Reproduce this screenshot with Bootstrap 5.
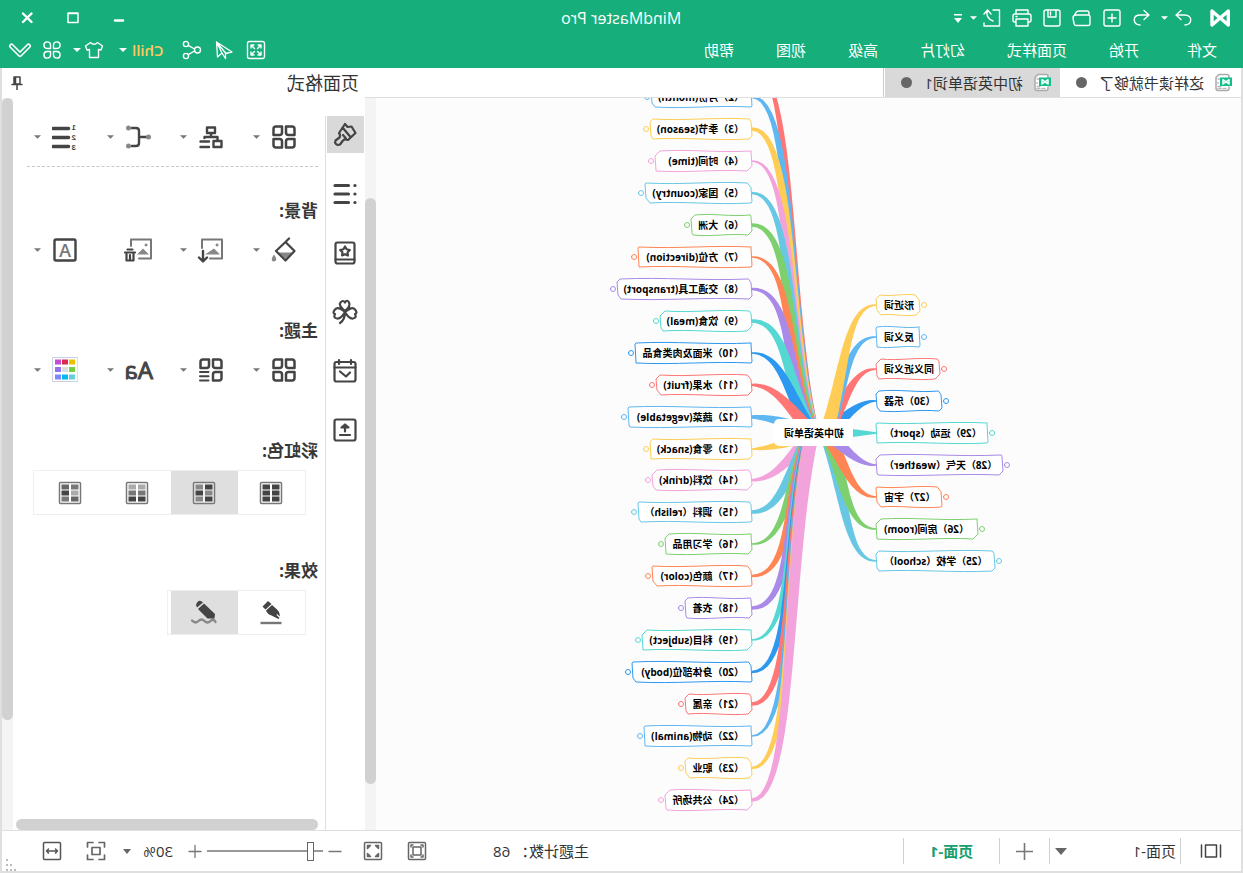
<!DOCTYPE html>
<html lang="zh-CN">
<head>
<meta charset="utf-8">
<meta name="viewport" content="width=device-width, initial-scale=1">
<title>MindMaster Pro</title>
<link href="https://cdn.jsdelivr.net/npm/bootstrap@5.3.0/dist/css/bootstrap.min.css" rel="stylesheet">
<style>
  :root { --brand: #16ae7a; --line: #dfdfdf; --ink: #444; }
  body { font-family: "Open Sans", "Noto Sans CJK SC", sans-serif; font-size: 15px; line-height: 20px; color: #333; overflow: hidden; }
  /* the whole window is shown flipped left to right */
  .window { transform: scaleX(-1); }
  button, select { font: inherit; color: inherit; background: none; border: 0; padding: 0; }
  button { display: inline-flex; align-items: center; justify-content: center; }
  svg { fill: none; stroke-linecap: round; stroke-linejoin: round; display: block; flex: none; }
  svg:not([stroke]) { stroke: currentColor; }
  svg.solid, .solid { fill: currentColor; stroke: none; }
  .soft { color: #888; }
  .title-bar { background: var(--brand); color: #fff; }
  .row-top { height: 36px; }
  .row-menu { height: 32px; padding-left: 26px; }
  .quick { gap: 6px; padding-left: 12px; }
  .pair { gap: 1px; }
  .tool { width: 24px; height: 24px; }
  .drop { width: 10px; height: 24px; }
  .win-btn { width: 46px; height: 36px; }
  .menu-list { gap: 42px; }
  .menu-list a { color: #fff; text-decoration: none; }
  .menu-list a:first-child { margin-right: 6px; }
  .chill { color: #ffc862; font-weight: 600; }
  .work { border: solid var(--line); border-width: 0 2px 2px; }
  .tabs { height: 30px; border-bottom: 1px solid var(--line); }
  .doc-tab { height: 29px; padding: 0 16px 0 8px; gap: 10px; }
  .doc-tab.active { background: #d9d9d9; }
  .doc-dot { width: 11px; height: 11px; border-radius: 50%; background: #666; margin-left: 2px; }
  .tab-end { width: 2px; border-right: 1px solid #ccc; }
  .canvas { background: #fcfcfc; }
  .canvas text { font-size: 10px; font-weight: 700; fill: #000; stroke: none; }
  .bar-v { width: 11px; flex: none; background: #f4f4f4; }
  .thumb { background: #d1d1d1; border-radius: 6px; }
  .thumb-map { height: 80%; margin: auto 0 46px; }
  .thumb-side { height: 85%; }
  .bar-h { height: 11px; margin: 0 3px 0 7px; }
  .side { width: 363px; flex: none; }
  .side-head { height: 30px; padding: 0 8px 0 6px; font-size: 18px; }
  .strip { width: 40px; flex: none; margin-top: 18px; gap: 22px; border-right: 1px solid var(--line); padding-left: 1px; color: var(--ink); }
  .strip button { width: 37px; height: 37px; }
  .strip .active { background: #d9d9d9; }
  .options { padding: 19px 14px 0 7px; color: var(--ink); min-width: 0; }
  .tool-row { height: 40px; padding-left: 18px; }
  .slot { flex: none; }
  .slot:not(:last-child) { width: 73px; }
  .slot .main-btn { width: 32px; height: 32px; }
  .slot .arrow-btn { width: 22px; height: 32px; color: #777; }
  .dashed { border-top: 1px dashed #c8c8c8; margin: 9px 0 32px; }
  .block { min-height: 120px; }
  .block h2 { font-size: 17px; line-height: 24px; font-weight: 700; margin: 0 0 7px; color: #383838; }
  .seg { border: 1px solid #efefef; width: max-content; height: 45px; margin-left: 12px; padding-right: 3px; }
  .seg button { width: 67px; height: 43px; }
  .seg .active { background: #dfdfdf; }
  .status { height: 41px; border-top: 1px solid var(--line); }
  .rule { width: 1px; height: 26px; background: #d0d0d0; }
  .pick { appearance: none; background: no-repeat right center url("data:image/svg+xml,%3Csvg xmlns='http://www.w3.org/2000/svg' width='12' height='7'%3E%3Cpath d='M0 0h12l-6 7z' fill='%23666'/%3E%3C/svg%3E"); }
  .page-pick { width: 121px; margin: 0 5px 0 4px; }
  .zoom-pick { width: 50px; margin: 0 15px 0 12px; background-size: 8px 5px; }
  .page-now { width: 95px; color: #16a06e; font-weight: 700; }
  .zoom { appearance: none; width: 116px; height: 20px; margin: 0 2px; background: linear-gradient(#999, #999) no-repeat center / 100% 2px; }
  .zoom::-webkit-slider-thumb { appearance: none; width: 7px; height: 19px; background: #fff; border: 1px solid #666; }
  .zoom::-moz-range-thumb { width: 5px; height: 17px; border-radius: 0; background: #fff; border: 1px solid #666; }
  .digits { font: 700 8px "Liberation Sans", sans-serif; }
  .aa { font: 24px "Open Sans", sans-serif; stroke: currentColor; stroke-width: 1; }
  .mark-a { font: 600 18px "Open Sans", sans-serif; fill: #777; stroke: none; }
  .grip { color: #bbb; }
</style>
</head>
<body>
<div class="window d-flex flex-column vh-100 bg-white">

<header class="title-bar">
  <div class="row-top d-flex align-items-center">
    <div class="quick d-flex align-items-center flex-fill w-50">
      <svg class="me-2" width="22" height="20" viewBox="0 0 22 20" stroke-width="3.400"><path d="M2.700 17V3L19 17V3L11.600 9.600M2.700 17L9.600 11"/></svg>
      <span class="pair d-flex">
        <button class="tool" aria-label="重做"><svg width="22" height="22" viewBox="0 0 22 22" stroke-width="1.400"><path d="M13 3.500L18 8l-5 4.500M18 8H9.500C1 8 1.500 17 9 18"/></svg></button>
        <button class="drop" aria-label="更多重做"><svg class="solid" width="7" height="4" viewBox="0 0 8 4"><path d="M0 0h8L4 4z"/></svg></button>
      </span>
      <button class="tool" aria-label="撤销"><svg width="22" height="22" viewBox="0 0 22 22" stroke-width="1.400"><path d="M9 3.500L4 8l5 4.500M4 8h8.500C21 8 20.500 17 13 18"/></svg></button>
      <button class="tool" aria-label="新建"><svg width="22" height="22" viewBox="0 0 22 22" stroke-width="1.400"><rect x="3" y="3" width="16" height="16" rx="2"/><path d="M11 7v8M7 11h8"/></svg></button>
      <button class="tool" aria-label="打开"><svg width="22" height="22" viewBox="0 0 22 22" stroke-width="1.400"><path d="M4 8V6q0-2 2-2h8q2 0 3 1.500L18.500 8M4 8h13q3 0 3 3l-1 5.500q-.3 2-2 2H5q-2 0-2-2V10q0-2 2-2"/></svg></button>
      <button class="tool" aria-label="保存"><svg width="22" height="22" viewBox="0 0 22 22" stroke-width="1.400"><rect x="3" y="3" width="16" height="16" rx="2"/><path d="M7 3v7h8V3M12.500 5v3"/></svg></button>
      <button class="tool" aria-label="打印"><svg width="22" height="22" viewBox="0 0 22 22" stroke-width="1.400"><path d="M5 7V3h12v4M5 15H3.500Q2 15 2 13V9q0-2 2-2h14q2 0 2 2v4q0 2-1.500 2H17M5 12h12v7H5z"/><path d="M16 9.500h1"/></svg></button>
      <span class="pair d-flex">
        <button class="tool" aria-label="导出"><svg width="22" height="22" viewBox="0 0 22 22" stroke-width="1.400"><path d="M10 3H3.500v16H19v-3M12 7l3.500-4L19 7M15.500 3.500q2.500 7-5.500 10.500"/></svg></button>
        <button class="drop" aria-label="更多导出"><svg class="solid" width="7" height="4" viewBox="0 0 8 4"><path d="M0 0h8L4 4z"/></svg></button>
      </span>
      <button class="drop" aria-label="自定义"><svg class="solid" width="8" height="9" viewBox="0 0 8 9"><path d="M0 0h8v1.500H0zM0 4h8L4 9z"/></svg></button>
    </div>
    <div class="text-nowrap fs-6">MindMaster Pro</div>
    <div class="d-flex justify-content-end flex-fill w-50 pe-1">
      <button class="win-btn" aria-label="最小化"><svg width="12" height="12" viewBox="0 0 12 12" stroke-width="2.400" stroke-linecap="butt"><path d="M2 8.500h8"/></svg></button>
      <button class="win-btn" aria-label="最大化"><svg width="12" height="12" viewBox="0 0 12 12" stroke-width="1.500"><path d="M1 1h10v9.500H1zM1 1.500h10"/></svg></button>
      <button class="win-btn" aria-label="关闭"><svg width="12" height="12" viewBox="0 0 12 12" stroke-width="2.400" stroke-linecap="butt"><path d="M1.500 1.500l8.500 8.500M10 1.500L1.500 10"/></svg></button>
    </div>
  </div>
  <div class="row-menu d-flex align-items-center pb-1">
    <nav class="menu-list d-flex flex-fill text-nowrap">
      <a href="#">文件</a><a href="#">开始</a><a href="#">页面样式</a><a href="#">幻灯片</a><a href="#">高级</a><a href="#">视图</a><a href="#">帮助</a>
    </nav>
    <div class="d-flex align-items-center gap-2 pe-2">
      <button class="tool" aria-label="全屏"><svg width="20" height="20" viewBox="0 0 20 20" stroke-width="1.400"><rect x="1.500" y="1.500" width="17" height="17" rx="2"/><path d="M5 8V5h3M5 5l3.500 3.500M12 5h3v3M15 5l-3.500 3.500M5 12v3h3M5 15l3.500-3.500M12 15h3v-3M15 15l-3.500-3.500"/></svg></button>
      <button class="tool" aria-label="演示"><svg width="20" height="20" viewBox="0 0 20 20" stroke-width="1.300"><path d="M17.500 2L2 12l6.500 1.500M17.500 2l-1 15-4.500-4M17.500 2l-9 11v5.500l3.500-5.500z"/></svg></button>
      <button class="tool" aria-label="分享"><svg width="20" height="20" viewBox="0 0 20 20" stroke-width="1.400"><circle cx="4.500" cy="10" r="3"/><circle cx="16" cy="4" r="2.600"/><circle cx="16" cy="16" r="2.600"/><path d="M7.500 9l6.300-3.600M7.500 11l6.300 3.600"/></svg></button>
      <span class="d-flex gap-1 pe-1 ms-2"><button class="chill">Chill</button><button class="drop" aria-label="账户"><svg class="solid" width="8" height="4" viewBox="0 0 8 4"><path d="M0 0h8L4 4z"/></svg></button></span>
      <span class="d-flex"><button class="tool" aria-label="皮肤"><svg width="20" height="20" viewBox="0 0 20 20" stroke-width="1.400"><path d="M6.500 2.500q3.500 3.500 7 0L18.500 6l-1.500 4-2.500-.5v8h-9v-8L3 10 1.500 6z"/></svg></button><button class="drop" aria-label="更多皮肤"><svg class="solid" width="8" height="4" viewBox="0 0 8 4"><path d="M0 0h8L4 4z"/></svg></button></span>
      <button class="tool" aria-label="应用"><svg width="20" height="20" viewBox="0 0 20 20" stroke-width="1.400"><path d="M8.500 8.500h-3.500a3.300 3.300 0 1 1 3.500-3.500zM11.500 8.500h3.500a3.300 3.300 0 1 0-3.500-3.500zM8.500 11.500h-3.500a3.300 3.300 0 1 0 3.500 3.500zM11.500 11.500h3.500a3.300 3.300 0 1 1-3.500 3.500z"/></svg></button>
      <button class="tool" aria-label="收起"><svg width="24" height="18" viewBox="0 0 24 18"><path d="M3.500 5l8.500 8.500L20.500 5" stroke="#fff" stroke-width="5"/><path d="M3.500 5l8.500 8.500L20.500 5" stroke="#16ae7a" stroke-width="1.800"/></svg></button>
    </div>
  </div>
</header>

<div class="work d-flex flex-column flex-fill overflow-hidden">
  <div class="d-flex flex-fill overflow-hidden">
    <main class="d-flex flex-column flex-fill overflow-hidden">
      <div class="tabs d-flex text-nowrap">
        <button class="doc-tab"><svg width="19" height="19" viewBox="0 0 19 19"><path d="M4 5V3.500Q4 1.500 6 1.500h8l3 3V15q0 2.500-2 2.500H6q-2 0-2-2V14" stroke="#aaa" stroke-width="1.500" fill="#fff"/><path d="M13 6h2M14.500 10h1M7 15.500h3M12 13.500h3M12 15.500h3" stroke="#bbb" stroke-width="1.400"/><path d="M1 4.500h12v8.500H1z" fill="#0fc08a" stroke="none"/><path d="M4 11V6.700L10 11V6.700L7 8.900L4 11" stroke="#fff" stroke-width="1.500"/></svg>这样读书就够了<i class="doc-dot"></i></button>
        <button class="doc-tab active"><svg width="19" height="19" viewBox="0 0 19 19"><path d="M4 5V3.500Q4 1.500 6 1.500h8l3 3V15q0 2.500-2 2.500H6q-2 0-2-2V14" stroke="#aaa" stroke-width="1.500" fill="#fff"/><path d="M13 6h2M14.500 10h1M7 15.500h3M12 13.500h3M12 15.500h3" stroke="#bbb" stroke-width="1.400"/><path d="M1 4.500h12v8.500H1z" fill="#0fc08a" stroke="none"/><path d="M4 11V6.700L10 11V6.700L7 8.900L4 11" stroke="#fff" stroke-width="1.500"/></svg>初中英语单词1<i class="doc-dot"></i></button>
        <div class="tab-end"></div>
      </div>
      <div class="d-flex flex-fill overflow-hidden">
        <div class="canvas flex-fill overflow-hidden"><svg class="w-100 h-100"><g id="map" transform="translate(-2 -98)"></g></svg></div>
        <div class="bar-v d-flex flex-column"><div class="thumb thumb-map"></div></div>
      </div>
    </main>

    <aside class="side d-flex flex-column">
      <div class="side-head d-flex align-items-center justify-content-between"><span>页面格式</span>
        <button aria-label="固定"><svg width="14" height="14" viewBox="0 0 14 14" stroke="#444" stroke-width="1.500" stroke-linecap="butt"><path d="M4 1h6v7H4zM8.500 1v7M2 8.500h10M7 9v5"/></svg></button></div>
      <div class="d-flex flex-fill overflow-hidden">
        <div class="strip d-flex flex-column">
          <button class="active" aria-label="页面格式"><svg width="26" height="26" viewBox="0 0 26 26" stroke-width="2.200"><path d="M13 2.500L10.500 5.500 6.500 5 2.500 11.500l7.500 7q3-1.500 5 .5l3 4q2.500 1 4-.5t.5-3.500l-4-3q-1.500-2 .5-4.500zM7.500 15.500l8-9.500M15 13.500l-3 3.500" transform="translate(0 -.500)"/></svg></button>
          <button aria-label="大纲"><svg width="26" height="26" viewBox="0 0 26 26" stroke-width="3.200"><path d="M9.500 4.500H23M9.500 13H23M9.500 21.500H23" /><path d="M3 4.500h.1M3 13h.1M3 21.500h.1"/></svg></button>
          <button aria-label="样式"><svg width="26" height="26" viewBox="0 0 26 26" stroke-width="2.200"><rect x="3.500" y="2.500" width="19" height="21" rx="2"/><path d="M3.500 19.500h19M13 6.500l1.600 2.800 3.200.7-2.200 2.300.3 3.200-2.900-1.300-2.900 1.300.3-3.200-2.200-2.300 3.200-.7z"/></svg></button>
          <button aria-label="剪贴画"><svg width="26" height="26" viewBox="0 0 26 26" stroke-width="2.200"><path d="M13 12Q7 7 9 3.500t4 0q2-3 4.500 0T13 12M13 13Q6 7 3 10.500t0 4.500Q1 19 5 19.500T13 13M13 13q7-6 10-2.500T23 15q2 4-2 4.500T13 13M13 13q0 8 5 11"/></svg></button>
          <button aria-label="任务"><svg width="26" height="26" viewBox="0 0 26 26" stroke-width="2.200"><rect x="2.500" y="4" width="21" height="19.500" rx="2"/><path d="M2.500 9.500h21M7 2v4M19 2v4M8 14.500l4 4 6-5"/></svg></button>
          <button aria-label="导出"><svg width="26" height="26" viewBox="0 0 26 26" stroke-width="2.200"><rect x="2.500" y="2.500" width="21" height="21" rx="2"/><path d="M8 18h10M13 14.500V8M9.500 10.500L13 7.500l3.500 3z"/></svg></button>
        </div>
        <div class="d-flex flex-column flex-fill overflow-hidden">
          <div class="options flex-fill">
            <div class="tool-row d-flex align-items-center">
              <div class="slot d-flex"><button class="main-btn" aria-label="布局"><svg width="26" height="26" viewBox="0 0 26 26" stroke-width="2.500"><path id="leaf" d="M5 2.500h6V8.500q0 2.500-2.500 2.500H2.500V5Q2.500 2.500 5 2.500zM21 2.500h-6V8.500q0 2.500 2.500 2.500h6V5Q23.500 2.500 21 2.500zM5 23.500h6V17.500Q11 15 8.500 15H2.500v6Q2.500 23.500 5 23.500zM21 23.500h-6V17.500Q15 15 17.500 15h6v6Q23.500 23.500 21 23.500z"/></svg></button><button class="arrow-btn" aria-label="展开"><svg class="solid" width="7" height="4" viewBox="0 0 8 4"><path d="M0 0h8L4 4z"/></svg></button></div>
              <div class="slot d-flex"><button class="main-btn" aria-label="结构"><svg width="26" height="26" viewBox="0 0 26 26" stroke-width="2.400"><path d="M9 3.500h8v5.500H9zM13 9v4M6.500 16v-3h13v1M2.500 17h8v6h-8zM15 17.500h8.500M15 23h8.500"/></svg></button><button class="arrow-btn" aria-label="展开"><svg class="solid" width="7" height="4" viewBox="0 0 8 4"><path d="M0 0h8L4 4z"/></svg></button></div>
              <div class="slot d-flex"><button class="main-btn" aria-label="连接线"><svg width="28" height="26" viewBox="0 0 28 26" stroke-width="2.400"><path d="M5 13h8M20 4h-4q-3 0-3 3v12q0 3 3 3h4"/><circle class="solid soft" cx="3.500" cy="13" r="2.500"/><circle class="solid soft" cx="23.500" cy="4" r="2.500"/><circle class="solid soft" cx="23.500" cy="22" r="2.500"/></svg></button><button class="arrow-btn" aria-label="展开"><svg class="solid" width="7" height="4" viewBox="0 0 8 4"><path d="M0 0h8L4 4z"/></svg></button></div>
              <div class="slot d-flex"><button class="main-btn" aria-label="编号"><svg width="26" height="32" viewBox="0 0 26 32" stroke-width="3.600" stroke-linecap="butt"><path d="M9.500 7.500H25M9.500 16.500H25M9.500 25.500H25"/><g class="solid digits"><text x="2" y="9">1</text><text x="2" y="19">2</text><text x="2" y="29">3</text></g></svg></button><button class="arrow-btn" aria-label="展开"><svg class="solid" width="7" height="4" viewBox="0 0 8 4"><path d="M0 0h8L4 4z"/></svg></button></div>
            </div>
            <div class="dashed"></div>
            <section class="block"><h2>背景:</h2>
              <div class="tool-row d-flex align-items-center">
                <div class="slot d-flex"><button class="main-btn" aria-label="填充"><svg width="26" height="26" viewBox="0 0 26 26" stroke-width="2.200"><path class="solid soft" d="M4.500 15.500h14l-7 6.500z"/><path d="M11.500 5l9.500 9-9.500 9.500L2.500 14zM8 1.500l4 4"/><path class="solid soft" d="M23 17.500q3 4 2 6t-4 0q-1-2 2-6"/></svg></button><button class="arrow-btn" aria-label="展开"><svg class="solid" width="7" height="4" viewBox="0 0 8 4"><path d="M0 0h8L4 4z"/></svg></button></div>
                <div class="slot d-flex"><button class="main-btn" aria-label="插入图片"><svg width="28" height="26" viewBox="0 0 28 26" stroke-width="2.400"><path stroke="#777" stroke-width="2" d="M15 21.500H3V2.500h20V11"/><path class="solid soft" d="M5 17.500l6-6 9 6zM8 6.500a1.500 1.500 0 1 1-.1 0z"/><path d="M22 14v10M18 20.500l4 4 4-4"/></svg></button><button class="arrow-btn" aria-label="展开"><svg class="solid" width="7" height="4" viewBox="0 0 8 4"><path d="M0 0h8L4 4z"/></svg></button></div>
                <div class="slot d-flex"><button class="main-btn" aria-label="删除图片"><svg width="30" height="26" viewBox="0 0 30 26" stroke-width="2.200"><path stroke="#777" stroke-width="2" d="M14 21.500H2V2.500h20V9"/><path class="solid soft" d="M4 17.500l6-6 6 6zM7 6.500a1.500 1.500 0 1 1-.1 0z"/><path d="M18 15.500h10M20.500 12.500h5M19.500 17v6.500h7V17M23 18v4"/></svg></button></div>
                <div class="slot d-flex"><button class="main-btn" aria-label="水印"><svg width="26" height="26" viewBox="0 0 26 26" stroke-width="2.400"><rect x="2.500" y="2.500" width="21" height="21" rx="1.500"/><text class="mark-a" x="13" y="19.500" text-anchor="middle">A</text></svg></button><button class="arrow-btn" aria-label="展开"><svg class="solid" width="7" height="4" viewBox="0 0 8 4"><path d="M0 0h8L4 4z"/></svg></button></div>
              </div>
            </section>
            <section class="block"><h2>主题:</h2>
              <div class="tool-row d-flex align-items-center">
                <div class="slot d-flex"><button class="main-btn" aria-label="主题"><svg width="26" height="26" viewBox="0 0 26 26" stroke-width="2.500"><use href="#leaf"/></svg></button><button class="arrow-btn" aria-label="展开"><svg class="solid" width="7" height="4" viewBox="0 0 8 4"><path d="M0 0h8L4 4z"/></svg></button></div>
                <div class="slot d-flex"><button class="main-btn" aria-label="主题样式"><svg width="26" height="26" viewBox="0 0 26 26" stroke-width="2.500"><path d="M5 2.500h6V8.500q0 2.500-2.500 2.500H2.500V5Q2.500 2.500 5 2.500zM21 2.500h-6V8.500q0 2.500 2.500 2.500h6V5Q23.500 2.500 21 2.500zM5 23.500h6V17.500Q11 15 8.500 15H2.500v6Q2.500 23.500 5 23.500z"/><path d="M15.500 15H24M15.500 19.200H24M15.500 23.400H24" stroke-width="2"/></svg></button><button class="arrow-btn" aria-label="展开"><svg class="solid" width="7" height="4" viewBox="0 0 8 4"><path d="M0 0h8L4 4z"/></svg></button></div>
                <div class="slot d-flex"><button class="main-btn" aria-label="字体"><svg width="32" height="34" viewBox="0 0 32 34"><text class="solid aa" x="1" y="26">Aa</text></svg></button><button class="arrow-btn" aria-label="展开"><svg class="solid" width="7" height="4" viewBox="0 0 8 4"><path d="M0 0h8L4 4z"/></svg></button></div>
                <div class="slot d-flex"><button class="main-btn" aria-label="主题颜色"><svg width="26" height="26" viewBox="0 0 26 26" stroke="none"><path d="M.5.5h25v24H.5z" fill="#fff" stroke="#ccd0e4"/><path fill="#ebc100" d="M3 2.500h6v5H3z"/><path fill="#db2850" d="M10 2.500h6v5h-6z"/><path fill="#c14fd0" d="M17 2.500h6v5h-6z"/><path fill="#75d140" d="M3 10h6v5H3z"/><path fill="#ddd" d="M10 10h6v5h-6z"/><path fill="#9275ee" d="M17 10h6v5h-6z"/><path fill="#68cde0" d="M3 17.500h6v5H3z"/><path fill="#00b8f5" d="M10 17.500h6v5h-6z"/><path fill="#7d87ff" d="M17 17.500h6v5h-6z"/></svg></button><button class="arrow-btn" aria-label="展开"><svg class="solid" width="7" height="4" viewBox="0 0 8 4"><path d="M0 0h8L4 4z"/></svg></button></div>
              </div>
            </section>
            <section class="block"><h2>彩虹色:</h2><div class="seg d-flex" id="rainbow"></div></section>
            <section class="block"><h2>效果:</h2>
              <div class="seg d-flex">
                <button aria-label="普通"><svg width="24" height="26" viewBox="0 0 24 26"><path d="M1.500 23h21" stroke="#777" stroke-width="2.400" stroke-linecap="butt"/><path class="solid" d="M15 1l5.500 5.500-3 3L11.500 4zM11 5l6 5.500q-1.500 4-5.500 5L4.500 19l-1-1 3-3-.5-1L3.200 16.500Q3 12 6 9.500z"/></svg></button>
                <button class="active" aria-label="手绘"><svg width="26" height="26" viewBox="0 0 26 26"><path d="M1.500 22q2-4 5-1t6 0 6 0 6.500-.5" stroke="#888" stroke-width="2.400"/><path class="solid" d="M14 2.500q3-3 5.500-.5t.5 5.500zM13 3.500l6 5.500-9.500 9.500H2.500L2 14z"/></svg></button>
              </div>
            </section>
          </div>
          <div class="bar-h thumb"></div>
        </div>
        <div class="bar-v"><div class="thumb thumb-side"></div></div>
      </div>
    </aside>
  </div>

  <footer class="status d-flex align-items-center text-nowrap">
    <button class="tool mx-3 ps-1" aria-label="页面列表"><svg width="22" height="16" viewBox="0 0 22 16" stroke="#444" stroke-width="1.500" stroke-linecap="butt"><path d="M1.500 2v12M20.500 2v12M5.500 2h11v12h-11z"/></svg></button>
    <div class="rule ms-1"></div>
    <select class="pick page-pick" aria-label="页面"><option>页面-1</option></select>
    <div class="rule"></div>
    <button class="px-3" aria-label="添加页面"><svg width="17" height="17" viewBox="0 0 17 17" stroke="#777" stroke-width="1.600" stroke-linecap="butt"><path d="M0 8.500h17M8.500 0v17"/></svg></button>
    <div class="rule"></div>
    <button class="page-now">页面-1</button>
    <div class="rule"></div>
    <div class="ms-auto me-5 pe-3">主题计数： 68</div>
    <button class="tool me-3" aria-label="适应窗口"><svg width="20" height="20" viewBox="0 0 20 20" stroke="#666" stroke-width="1.500"><rect x="1.500" y="1.500" width="17" height="17" rx="1"/><path d="M6 6h8v8H6zM4 6V4h2M14 4h2v2M4 14v2h2M14 16h2v-2"/></svg></button>
    <button class="tool me-3 ms-1" aria-label="全屏"><svg width="20" height="20" viewBox="0 0 20 20" stroke="#666" stroke-width="1.500"><rect x="1.500" y="1.500" width="17" height="17" rx="1"/><path d="M4.500 7.500v-3h3l-3 3M12.500 4.500h3v3l-3-3M4.500 12.500v3h3l-3-3M12.500 15.500h3v-3l-3 3"/></svg></button>
    <button aria-label="缩小"><svg width="20" height="14" viewBox="0 0 20 14" stroke="#777" stroke-width="1.300"><path d="M4 7.500h12"/></svg></button>
    <input type="range" class="zoom" min="0" max="100" value="8" aria-label="缩放">
    <button aria-label="放大"><svg width="20" height="14" viewBox="0 0 20 14" stroke="#777" stroke-width="1.300"><path d="M4 7.500h12M10 1.500v12"/></svg></button>
    <select class="pick zoom-pick" aria-label="缩放比例"><option>30%</option></select>
    <button class="tool me-3" aria-label="适合页面"><svg width="20" height="20" viewBox="0 0 20 20" stroke="#666" stroke-width="1.700"><path d="M1.500 6V1.500H7M13 1.500h5.500V6M1.500 14v4.500H7M13 18.500h5.500V14M6 6.500h8v7H6z"/></svg></button>
    <button class="tool me-4 ms-1" aria-label="适合宽度"><svg width="20" height="20" viewBox="0 0 20 20" stroke="#555" stroke-width="1.500"><rect x="1.500" y="1.500" width="17" height="17" rx="1"/><path d="M4.500 10h11M6.500 8l-2 2 2 2M13.500 8l2 2-2 2"/></svg></button>
    <svg class="solid grip align-self-end me-1" width="10" height="12" viewBox="0 0 10 12"><path d="M8 0h2v2H8zM4 5h2v2H4zM8 5h2v2H8zM0 10h2v2H0zM4 10h2v2H4zM8 10h2v2H8z"/></svg>
  </footer>
</div>
</div>

<script src="https://cdn.jsdelivr.net/npm/bootstrap@5.3.0/dist/js/bootstrap.bundle.min.js"></script>
<script>
  // Branch colours repeat in this order, starting with topic 1.
  const colors = ['#ff7675', '#5fb7f1', '#ffcd55', '#f2a3dc', '#68c8e3', '#7ed06f', '#ff8555', '#a98ae8', '#55d8d3', '#2d98f0'];
  // [label, outer edge of the box]; topic 1 is scrolled out of view, only its branch shows
  const right = [['', 0], ['（2）月份(month)', 592], ['（3）季节(season)', 593], ['（4）时间(time)', 588], ['（5）国家(country)', 598],
    ['（6）大洲', 552], ['（7）方位(direction)', 605], ['（8）交通工具(transport)', 626], ['（9）饮食(meal)', 583],
    ['（10）米面及肉类食品', 608], ['（11）水果(fruit)', 587], ['（12）蔬菜(vegetable)', 615], ['（13）零食(snack)', 593],
    ['（14）饮料(drink)', 591], ['（15）调料（relish）', 605], ['（16）学习用品', 578], ['（17）颜色(color)', 591],
    ['（18）衣着', 558], ['（19）科目(subject)', 601], ['（20）身体部位(body)', 611], ['（21）亲属', 558],
    ['（22）动物(animal)', 599], ['（23）职业', 558], ['（24）公共场所', 578]];
  const left = [['（25）学校（school）', 248], ['（26）房间(room)', 265], ['（27）宇宙', 301], ['（28）天气（weather）', 240],
    ['（29）运动（sport）', 255], ['（30）乐器', 301], ['同义近义词', 303], ['反义词', 323], ['形近词', 323]];

  function branch(p, w0, w1) {
    const a = [], b = [];
    for (let i = 0; i <= 24; i++) {
      const t = i / 24, s = 1 - t;
      const at = k => s*s*s*p[0][k] + 3*s*s*t*p[1][k] + 3*s*t*t*p[2][k] + t*t*t*p[3][k];
      const d = k => s*s*(p[1][k]-p[0][k]) + 2*s*t*(p[2][k]-p[1][k]) + t*t*(p[3][k]-p[2][k]);
      const len = Math.hypot(d(0), d(1)) || 1, w = (w0*s + w1*t) / 2;
      a.push([at(0) - d(1)/len*w, at(1) + d(0)/len*w]);
      b.unshift([at(0) + d(1)/len*w, at(1) - d(0)/len*w]);
    }
    return 'M' + a.concat(b).map(q => q.map(v => v.toFixed(1)).join(' ')).join('L') + 'z';
  }
  // Hand-drawn box: cut corners that differ from topic to topic, wavy long sides.
  function box(x1, x2, y, i) {
    const t = y - 10, b = y + 10, w = x2 - x1, c = [1, 4, 3, 1, 5, 2][i % 6], e = [4, 1, 3, 5, 1][i % 5], v = i % 2 ? 2 : -2;
    return `M${x1+c} ${t}C${x1+w*.35} ${t+v} ${x1+w*.65} ${t-v} ${x2-e} ${t}L${x2} ${t+e}L${x2-1} ${b-c}L${x2-c} ${b}` +
      `C${x1+w*.65} ${b+v} ${x1+w*.35} ${b-v} ${x1+e} ${b}L${x1} ${b-e}L${x1+1} ${t+c}z`;
  }
  let lines = '', nodes = '';
  right.forEach(([label, edge], i) => {
    const y = Math.round(65 + i * 31.96), dy = y - 433, k = Math.min(1, Math.abs(dy) / 150), c = colors[i % 10];
    lines += `<path fill="${c}" stroke="none" d="${branch([[431, 433], [449 + 9*k, 433 + dy*(.55 - .2*k)], [476 - 29*k, y], [491, y]], 14, 1.5 + i % 3)}"/>`;
    if (label) nodes += `<path fill="#fff" stroke="${c}" d="${box(491, edge, y, i)}"/><circle cx="${edge + 4}" cy="${y}" r="2.500" fill="#fff" stroke="${c}"/><text x="499" y="${y + 4}">${label}</text>`;
  });
  left.forEach(([label, edge], i) => {
    const y = 561 - i * 32, dy = y - 433, k = Math.min(1, Math.abs(dy) / 100), c = colors[(i + 4) % 10];
    lines += `<path fill="${c}" stroke="none" d="${branch([[417, 433], [398, 433 + dy*.45], [380 + 18*k, y], [367, y]], 14, 1.500)}"/>`;
    nodes += `<path fill="#fff" stroke="${c}" d="${box(edge, 367, y, i + 2)}"/><circle cx="${edge - 4}" cy="${y}" r="2.500" fill="#fff" stroke="${c}"/><text x="359" y="${y + 4}" text-anchor="end">${label}</text>`;
  });
  document.getElementById('map').innerHTML = lines + nodes +
    '<rect x="390" y="419" width="79" height="27" rx="5" fill="#fff" stroke="none"/><text x="399" y="437">初中英语单词</text>';

  // Rainbow swatches: shades listed left to right, top to bottom.
  const shades = [['444','444','444','444','444','444'], ['444','888','888','444','444','888'],
    ['aaa','aaa','777','777','444','444'], ['777','666','aaa','444','666','777']];
  document.getElementById('rainbow').innerHTML = shades.map((s, n) =>
    `<button class="${n === 1 ? 'active' : ''}" aria-label="彩虹色 ${n + 1}"><svg width="24" height="24" viewBox="0 0 24 24"><rect x="1.500" y="1.500" width="21" height="21" rx="1" fill="#fff" fill-opacity=".6" stroke="#777" stroke-width="1.500"/>` +
    s.map((v, j) => `<rect x="${3.500 + j % 2 * 9.500}" y="${3.500 + (j >> 1) * 6}" width="7.500" height="5" stroke="none" fill="#${v}"/>`).join('') + '</svg></button>').join('');
</script>
</body>
</html>
